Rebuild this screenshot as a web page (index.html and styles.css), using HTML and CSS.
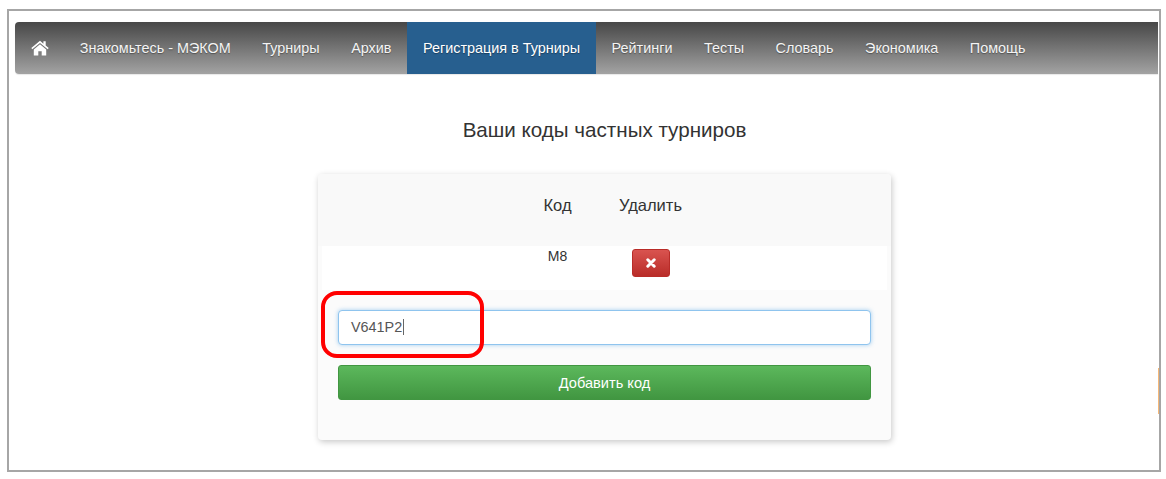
FILE: index.html
```html
<!DOCTYPE html>
<html lang="ru">
<head>
  <meta charset="UTF-8" />
  <title>Ваши коды частных турниров</title>
  <link rel="stylesheet" href="styles.css">
</head>
<body>
  <div class="frame">
    <nav class="navbar">
      <a class="nav-home" href="#">
        <svg width="18" height="16" viewBox="0 0 18 16"><path fill="#fff" d="M9 0.8 0.3 8.1l1 1.2L9 2.9l7.700 6.400 1-1.200-3-2.500V1.200h-2.300v2.500z"/><path fill="#fff" d="M9 4.300 2.800 9.400V15.400h4.500v-4.200h3.400v4.200h4.500V9.400z"/></svg>
      </a>
      <a href="#">Знакомьтесь - МЭКОМ</a>
      <a href="#">Турниры</a>
      <a href="#">Архив</a>
      <a class="active" href="#">Регистрация в Турниры</a>
      <a href="#">Рейтинги</a>
      <a href="#">Тесты</a>
      <a href="#">Словарь</a>
      <a href="#">Экономика</a>
      <a href="#">Помощь</a>
    </nav>

    <div class="content">
      <h2 class="title">Ваши коды частных турниров</h2>

      <div class="panel">
        <div class="row head">
          <div class="col-code">Код</div>
          <div class="col-del">Удалить</div>
        </div>
        <div class="row item">
          <div class="col-code">M8</div>
          <div class="col-del">
            <button class="btn-del">
              <svg width="10" height="10" viewBox="0 0 10 10"><path stroke="#fff" stroke-width="3" stroke-linecap="round" d="M1.800 1.800l6.400 6.400M8.200 1.800l-6.400 6.400"/></svg>
            </button>
          </div>
        </div>
        <div class="form">
          <div class="code-input">V641P2<span class="caret"></span></div>
          <button class="btn-add">Добавить код</button>
        </div>
      </div>
    </div>

    <div class="mark"></div>
    <div class="edge-orange"></div>
  </div>
</body>
</html>
```

FILE: styles.css
```css
body {
  margin: 0;
  background: #fff;
  font-family: "Liberation Sans", Arial, sans-serif;
  color: #333;
}

.frame {
  position: relative;
  box-sizing: border-box;
  width: 1154px;
  height: 463px;
  margin: 9px 0 0 7px;
  padding: 11px 1px 0 6px;
  border: 2px solid #a6a6a6;
}

.navbar {
  display: flex;
  height: 52px;
  border-radius: 4px 0 0 4px;
  background: linear-gradient(#474747, #a3a3a3);
  box-shadow: 0 1px 1px #e8e8e8;
}

.navbar a {
  display: flex;
  align-items: center;
  padding: 0 15.75px;
  font-size: 14.4px;
  color: #f4f4f4;
  text-decoration: none;
  text-shadow: 0 1px 1px rgba(0, 0, 0, 0.35);
  white-space: nowrap;
}

.navbar .nav-home {
  padding: 0 15px 0 16px;
}

.navbar .active {
  background: #275f8f;
  color: #fff;
}

.content {
  width: 573px;
  margin-left: 303px;
}

.title {
  margin: 44px 0 0;
  font-size: 20.6px;
  font-weight: 400;
  line-height: 24px;
  text-align: center;
}

.panel {
  box-sizing: border-box;
  height: 266px;
  margin-top: 32px;
  border-radius: 4px;
  background: #fbfbfb;
  box-shadow: 1px 2px 6px rgba(0, 0, 0, 0.22);
}

.row {
  display: flex;
  justify-content: center;
  padding-left: 2px;
}

.head {
  height: 72px;
  padding-top: 20px;
  box-sizing: border-box;
  font-size: 16.5px;
  line-height: 22px;
  background: #f9f9f9;
  border-radius: 4px 4px 0 0;
}

.item {
  height: 44px;
  margin: 0 4px;
  font-size: 14px;
  background: #fff;
}

.col-code {
  width: 90px;
  text-align: center;
}

.col-del {
  width: 96px;
  text-align: center;
}

.item .col-code {
  padding-top: 2px;
  line-height: 16px;
}

.btn-del {
  display: inline-flex;
  align-items: center;
  justify-content: center;
  width: 38px;
  height: 28px;
  margin-top: 3px;
  padding: 0;
  border: 1px solid #b92c28;
  border-radius: 3px;
  background: linear-gradient(#d9534f, #b92c28);
}

.form {
  padding: 20px 20px 0;
}

.code-input {
  box-sizing: border-box;
  height: 35px;
  padding-left: 12px;
  font-size: 14.4px;
  line-height: 32px;
  color: #555;
  background: #fff;
  border: 1px solid #8fc4ee;
  border-radius: 4px;
  box-shadow: 0 0 4px rgba(102, 175, 233, 0.6);
}

.caret {
  display: inline-block;
  width: 1px;
  height: 16px;
  margin-left: 1px;
  vertical-align: -3px;
  background: #666;
}

.btn-add {
  display: block;
  box-sizing: border-box;
  width: 100%;
  height: 35px;
  margin-top: 20px;
  padding: 0;
  font: 14.6px "Liberation Sans", Arial, sans-serif;
  color: #fff;
  border: 1px solid #419641;
  border-radius: 3px;
  background: linear-gradient(#5cb85c, #419641);
}

/* red highlight drawn over the screenshot */
.mark {
  position: absolute;
  left: 312px;
  top: 280px;
  box-sizing: border-box;
  width: 163px;
  height: 67px;
  border: 4px solid #f00;
  border-radius: 16px;
}

.edge-orange {
  position: absolute;
  right: 0;
  top: 357px;
  width: 1px;
  height: 46px;
  background: #f6b878;
}
```
